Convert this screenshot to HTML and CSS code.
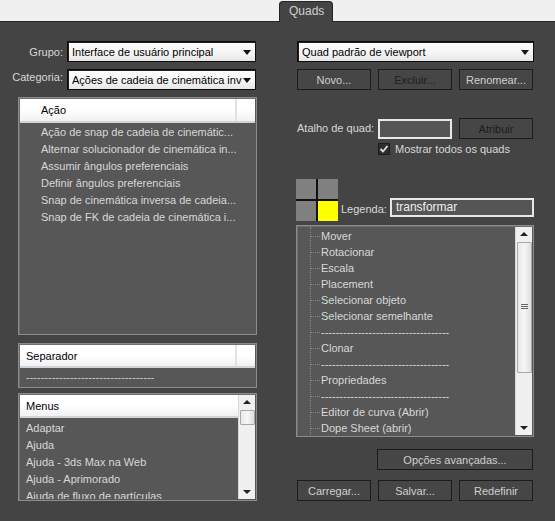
FILE: index.html
```html
<!DOCTYPE html>
<html>
<head>
<meta charset="utf-8">
<link rel="stylesheet" href="styles.css">
</head>
<body>
<div class="tabstrip"><div class="tab">Quads</div></div>
<div class="main">
  <div class="left">
    <div class="field"><span class="lbl">Grupo:</span><div class="select"><span class="val">Interface de usuário principal</span><i class="arrow"></i></div></div>
    <div class="field"><span class="lbl lbl-up">Categoria:</span><div class="select"><span class="val">Ações de cadeia de cinemática inversa</span><i class="arrow"></i></div></div>

    <div class="list actions">
      <div class="hdr"><span class="hcell hcell-ind">Ação</span><span class="hrest"></span></div>
      <div class="items ind">
        <div>Ação de snap de cadeia de cinemátic...</div>
        <div>Alternar solucionador de cinemática in...</div>
        <div>Assumir ângulos preferenciais</div>
        <div>Definir ângulos preferenciais</div>
        <div>Snap de cinemática inversa de cadeia...</div>
        <div>Snap de FK de cadeia de cinemática i...</div>
      </div>
    </div>

    <div class="list separator">
      <div class="hdr hdr-sm"><span class="hcell">Separador</span><span class="hrest"></span></div>
      <div class="items"><div class="dash">-----------------------------------</div></div>
    </div>

    <div class="list menus">
      <div class="menus-body">
        <div class="hdr hdr-sm"><span class="hcell">Menus</span></div>
        <div class="items">
          <div>Adaptar</div>
          <div>Ajuda</div>
          <div>Ajuda - 3ds Max na Web</div>
          <div>Ajuda - Aprimorado</div>
          <div>Ajuda de fluxo de partículas</div>
        </div>
      </div>
      <div class="sbar sbar-menus">
        <i class="up"></i>
        <div class="thumb small"></div>
        <div class="track-fill"></div>
        <i class="down"></i>
      </div>
    </div>
  </div>

  <div class="right">
    <div class="select wide"><span class="val">Quad padrão de viewport</span><i class="arrow"></i></div>
    <div class="btnrow first">
      <div class="btn">Novo...</div>
      <div class="btn dim">Excluir...</div>
      <div class="btn">Renomear...</div>
    </div>
    <div class="shortcut">
      <span class="sc-lbl">Atalho de quad:</span>
      <div class="input short"></div>
      <div class="btn dim">Atribuir</div>
    </div>
    <div class="check">
      <svg class="cbox" width="12" height="12" viewBox="0 0 12 12">
        <rect x="0.5" y="0.5" width="11" height="11" fill="#2e2e2e" stroke="#1c1c1c"/>
        <path d="M2.5 6 L5 8.5 L9.5 3" fill="none" stroke="#e0e0e0" stroke-width="1.8"/>
      </svg>
      <span>Mostrar todos os quads</span>
    </div>
    <div class="quadrow">
      <div class="quads">
        <div class="q"></div><div class="q"></div><div class="q"></div><div class="q on"></div>
      </div>
      <span class="lg-lbl">Legenda:</span>
      <div class="input legend">transformar</div>
    </div>
    <div class="list tree">
      <div class="tree-body">
        <div class="titem">Mover</div>
        <div class="titem">Rotacionar</div>
        <div class="titem">Escala</div>
        <div class="titem">Placement</div>
        <div class="titem">Selecionar objeto</div>
        <div class="titem">Selecionar semelhante</div>
        <div class="titem">-----------------------------------</div>
        <div class="titem">Clonar</div>
        <div class="titem">-----------------------------------</div>
        <div class="titem">Propriedades</div>
        <div class="titem">-----------------------------------</div>
        <div class="titem">Editor de curva (Abrir)</div>
        <div class="titem">Dope Sheet (abrir)</div>
      </div>
      <div class="sbar sbar-tree">
        <i class="up"></i>
        <div class="thumb big"><span class="grip"></span></div>
        <div class="track-fill"></div>
        <i class="down"></i>
      </div>
    </div>
    <div class="adv"><div class="btn advbtn">Opções avançadas...</div></div>
    <div class="btnrow last">
      <div class="btn">Carregar...</div>
      <div class="btn">Salvar...</div>
      <div class="btn">Redefinir</div>
    </div>
  </div>
</div>
</body>
</html>
```

FILE: styles.css
```css
* { box-sizing: border-box; }
html, body { margin: 0; padding: 0; }
body {
  width: 555px;
  height: 521px;
  overflow: hidden;
  background: #444444;
  font-family: "Liberation Sans", Arial, sans-serif;
  font-size: 11px;
  color: #d8d8d8;
}

/* tab strip */
.tabstrip {
  height: 22px;
  background: #f0f0f0;
  border-bottom: 1px solid #262626;
  display: flex;
  align-items: flex-end;
  padding-left: 279px;
}
.tab {
  width: 54px;
  height: 21px;
  margin-bottom: -1px;
  background: #444444;
  border: 1px solid #262626;
  border-bottom: none;
  border-radius: 4px 4px 0 0;
  color: #d0d0d0;
  font-size: 12px;
  line-height: 19px;
  padding-left: 9px;
}

.main {
  display: grid;
  grid-template-columns: 245px 238px;
  column-gap: 39px;
  padding-left: 12px;
  padding-top: 19px;
}

/* left column */
.left { display: flex; flex-direction: column; }
.field { display: flex; align-items: center; height: 21px; margin-bottom: 7px; }
.lbl { width: 51px; margin-right: 4px; text-align: right; white-space: nowrap; }
.lbl-up { position: relative; top: -3px; }

.select {
  position: relative;
  width: 189px;
  height: 21px;
  border: 1px solid #0c0c0c;
  box-shadow: inset 1px 1px 0 #1e1e1e;
  background: linear-gradient(#ffffff, #f4f4f4 60%, #e6e6e6);
  color: #000;
  display: flex;
  align-items: center;
  padding-left: 4px;
}
.select .val { white-space: nowrap; overflow: hidden; width: 170px; }
.select .arrow {
  position: absolute;
  right: 4px;
  top: 8px;
  width: 0; height: 0;
  border-left: 4px solid transparent;
  border-right: 4px solid transparent;
  border-top: 5px solid #111;
}
.select.wide { width: 237px; margin-left: 1px; }
.select.wide .val { width: 210px; }

/* lists */
.list {
  background: #575757;
  border: 1px solid #8c8c8c;
  box-shadow: inset 1px 1px 0 #6e6e6e;
  padding: 1px;
}
.left .list { margin-left: 6px; width: 239px; }
.actions { height: 238px; }
.separator { height: 45px; margin-top: 8px; }
.menus { height: 108px; margin-top: 5px; display: flex; }

.hdr {
  display: flex;
  height: 24px;
  background: linear-gradient(#ffffff, #ffffff 45%, #f0f1f3);
  border-bottom: 2px solid #d4d4d4;
  color: #000;
}
.hdr-sm { height: 23px; }
.hcell {
  width: 217px;
  border-right: 2px solid #e2e2e2;
  display: flex;
  align-items: center;
  padding-left: 6px;
}
.hcell-ind { padding-left: 21px; }
.hrest { flex: 1; }

.items { padding-top: 1px; }
.items > div { height: 17px; line-height: 17px; padding-left: 6px; white-space: nowrap; }
.items.ind > div { padding-left: 21px; }
.items .dash { color: #cfcfcf; padding-top: 0; }

.menus-body { flex: 1; overflow: hidden; }
.menus-body .hdr .hcell { width: auto; flex: 1; border-right: none; }
.menus-body .items { padding-top: 2px; }

/* scrollbars */
.sbar {
  width: 17px;
  background: #f0f0f0;
  border-left: 1px solid #d8d8d8;
  display: flex;
  flex-direction: column;
  align-items: center;
}
.sbar .up, .sbar .down { display: block; height: 15px; width: 100%; position: relative; flex: none; }
.sbar .up::after, .sbar .down::after {
  content: "";
  position: absolute;
  left: 4px;
  width: 0; height: 0;
  border-left: 4px solid transparent;
  border-right: 4px solid transparent;
}
.sbar .up::after { top: 5px; border-bottom: 4px solid #222; }
.sbar .down::after { top: 6px; border-top: 4px solid #222; }
.thumb {
  width: 15px;
  flex: none;
  border: 1px solid #a9a9a9;
  border-radius: 1px;
  background: linear-gradient(90deg, #e9e9e9, #f6f6f6 50%, #dedede);
  position: relative;
}
.thumb.small { height: 15px; }
.thumb.big { height: 131px; }
.grip {
  position: absolute;
  left: 3px; top: 61px;
  width: 7px; height: 5px;
  border-top: 1px solid #666;
  border-bottom: 1px solid #666;
}
.grip::after {
  content: "";
  position: absolute;
  left: 0; right: 0; top: 1px;
  border-top: 1px solid #666;
}
.track-fill { flex: 1; }

/* right column */
.right { display: flex; flex-direction: column; }
.btnrow { display: flex; gap: 7px; padding-left: 1px; height: 21px; }
.btnrow.first { margin-top: 7px; }
.btnrow.last { margin-top: 10px; }
.btn {
  width: 74px;
  height: 21px;
  border: 1px solid #1c1c1c;
  background: #464646;
  color: #cfcfcf;
  display: flex;
  align-items: center;
  justify-content: center;
  white-space: nowrap;
}
.btn.dim { color: #1e1e1e; }

.shortcut { display: flex; align-items: center; margin-top: 28px; height: 21px; padding-left: 1px; }
.sc-lbl { width: 81px; white-space: nowrap; position: relative; top: -1px; }
.input {
  border: 2px solid #e8e8e8;
  background: #555555;
  color: #f0f0f0;
}
.input.short { width: 74px; height: 20px; margin-right: 7px; }
.shortcut .btn { height: 21px; }

.check { display: flex; align-items: center; margin-top: 3px; padding-left: 82px; height: 14px; }
.cbox { margin-right: 5px; flex: none; }

.quadrow { display: flex; align-items: flex-end; margin-top: 23px; height: 42px; }
.quads {
  display: grid;
  grid-template-columns: 20px 20px;
  grid-template-rows: 20px 20px;
  gap: 2px;
  background: #111;
  width: 42px;
  height: 42px;
}
.q { background: #808080; }
.q.on { background: #ffff00; }
.lg-lbl { margin-left: 3px; margin-right: 3px; margin-bottom: 6px; white-space: nowrap; }
.input.legend {
  width: 146px;
  height: 19px;
  margin-bottom: 4px;
  padding-left: 4px;
  line-height: 15px;
  font-size: 12px;
}

.tree { margin-top: 4px; height: 212px; display: flex; }
.tree-body {
  flex: 1;
  position: relative;
  padding-top: 1px;
  overflow: hidden;
}
.tree-body::before {
  content: "";
  position: absolute;
  left: 12px; top: 0; bottom: 0;
  border-left: 1px dotted #8a8a8a;
}
.titem {
  position: relative;
  height: 16px;
  line-height: 16px;
  padding-left: 23px;
  white-space: nowrap;
}
.titem::before {
  content: "";
  position: absolute;
  left: 13px; top: 8px;
  width: 9px;
  border-top: 1px dotted #8a8a8a;
}

.adv { margin-top: 12px; padding-left: 81px; }
.btn.advbtn { width: 156px; }
```
